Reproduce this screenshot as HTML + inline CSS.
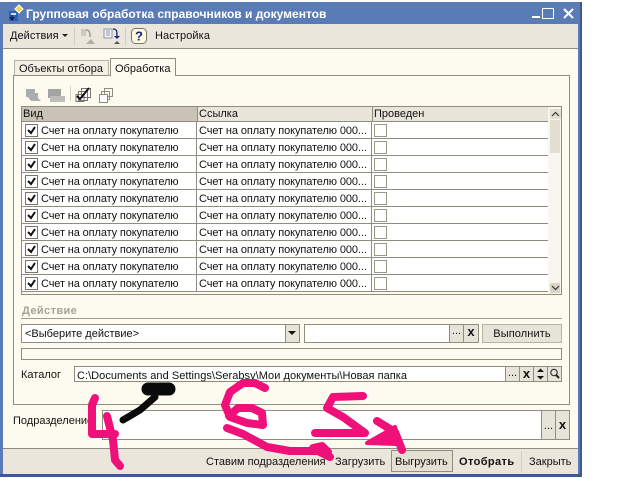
<!DOCTYPE html>
<html><head><meta charset="utf-8">
<style>
html,body{margin:0;padding:0;background:#fff}
#w{position:relative;width:640px;height:482px;overflow:hidden;background:#fff;font:11px "Liberation Sans",sans-serif;color:#111}
#w div{position:absolute;box-sizing:border-box}
.t{white-space:nowrap;line-height:14px}
.b{border:1px solid #8f8c80}
.btn{background:#e6e3d8;border:1px solid #8f8c80;text-align:center;line-height:13px}
.r{left:22px;width:526px;height:17px;border-bottom:1px solid #8f8c80;background:#fff}
.ck{left:3px;top:2px;width:13px;height:13px;border:1px solid #77756c;background:#fff}
.ck2{left:352px;top:2px;width:13px;height:13px;border:1px solid #99968a;background:#fff}
.a{left:19px;top:2px;letter-spacing:-.12px}
.c{left:177px;top:2px;letter-spacing:-.1px}
.v1{left:174px;top:0;width:1px;height:17px;background:#8f8c80}
.v2{left:349px;top:0;width:1px;height:17px;background:#8f8c80}
</style></head><body>
<div id="w">
<div style="left:0;top:2px;width:582px;height:475px;background:#5a7cb6"></div>
<div style="left:580px;top:2px;width:2px;height:475px;background:#3d5a8e"></div>
<div style="left:0;top:474px;width:582px;height:3px;background:#3d5a8e"></div>
<div style="left:3px;top:24px;width:575px;height:450px;background:#fdfaef"></div>
<div class="t" style="left:26px;top:7px;color:#fff;font-weight:bold;font-size:12px">Групповая обработка справочников и документов</div>
<svg style="position:absolute;left:8px;top:4px" width="18" height="18"><rect x="1" y="7" width="9" height="10" fill="#2b5fc0"/><rect x="3" y="9" width="5" height="2" fill="#dde"/><path d="M4 11v4M2 13l2 3 2-3" stroke="#111" fill="none"/><path d="M11 1l4 4-4 4-4-4z" fill="#f3d84a" stroke="#fff"/></svg>
<div style="left:532px;top:16px;width:8px;height:2px;background:#fff"></div>
<div style="left:542px;top:8px;width:12px;height:11px;border:1.5px solid #fff"></div>
<svg style="position:absolute;left:563px;top:8px" width="12" height="12"><path d="M1 1l9 9M10 1l-9 9" stroke="#fff" stroke-width="2"/></svg>

<div style="left:3px;top:24px;width:575px;height:25px;background:#ebe6dc;border-bottom:1px solid #8f8c80"></div>
<div class="t" style="left:10px;top:29px;letter-spacing:.05px">Действия</div>
<svg style="position:absolute;left:62px;top:34px" width="7" height="4"><path d="M0 0h6l-3 3z" fill="#222"/></svg>
<div style="left:74px;top:27px;width:1px;height:19px;background:#d3cfc4"></div>
<div style="left:125px;top:27px;width:1px;height:19px;background:#d3cfc4"></div>
<svg style="position:absolute;left:78px;top:26px" width="20" height="20"><path d="M3 3h5v7H3z" fill="#c9c9c6"/><path d="M8 4c4 0 4 3 4 7" stroke="#9a9a96" stroke-width="1.5" fill="none"/><path d="M8 18l5-5 4 5z" fill="#aeb0a8"/></svg>
<svg style="position:absolute;left:103px;top:26px" width="20" height="20"><rect x="1" y="3" width="8" height="9" fill="#f4f4f4" stroke="#8c93a8"/><path d="M3 5h4M3 7h4M3 9h4" stroke="#8c93a8"/><path d="M10 3c4 0 4 2 4 8" stroke="#14247f" stroke-width="1.3" fill="none"/><path d="M11 10h6l-3 3z" fill="#14247f"/><path d="M11 18l3-3 3 3z" fill="#55554f"/></svg>
<svg style="position:absolute;left:130px;top:26px" width="18" height="20"><rect x="1.5" y="2.5" width="15" height="15" rx="4" fill="#fffbdc" stroke="#77766a"/><text x="9" y="14.5" font-family="Liberation Sans" font-weight="bold" font-size="13" text-anchor="middle" fill="#12208c">?</text></svg>
<div class="t" style="left:155px;top:29px;letter-spacing:.1px">Настройка</div>

<div style="left:13px;top:75px;width:557px;height:330px;border:1px solid #8f8c80"></div>
<div style="left:14px;top:60px;width:95px;height:16px;background:#f3efe3;border:1px solid #b5b2a6;border-bottom:1px solid #8f8c80"></div>
<div class="t" style="left:19px;top:62px">Объекты отбора</div>
<div style="left:110px;top:58px;width:66px;height:18px;background:#fdfaef;border:1px solid #8f8c80;border-bottom:0"></div>
<div class="t" style="left:115px;top:62px">Обработка</div>

<svg style="position:absolute;left:24px;top:85px" width="90" height="18"><path d="M2 4h9v4h3v5l3 3H7l-3-4H2z" fill="#a9adae"/><rect x="24" y="4" width="13" height="9" fill="#a4a4a2"/><rect x="26" y="11" width="15" height="6" fill="#bdbdb9"/><path d="M46.500 1v15" stroke="#d3cfc4"/><path d="M57.500 3.500h9v9h-9zM54.500 6.500h9v9h-9zM52 9.500h8v7h-8z" fill="#fff" stroke="#77756c"/><path d="M53 11l3 3 9-11" stroke="#111" stroke-width="2" fill="none"/><path d="M80.500 3.500h8v8h-8zM77.500 6.500h8v8h-8z" fill="#fdfaef" stroke="#8f8c80"/><path d="M75.500 9.500h8v8h-8z" fill="#fff" stroke="#8f8c80"/></svg>

<div class="b" style="left:21px;top:106px;width:541px;height:189px;background:#fdfaef"></div>
<div style="left:22px;top:107px;width:175px;height:15px;background:#c8c3b5;border-bottom:1px solid #8f8c80"></div>
<div style="left:197px;top:107px;width:175px;height:15px;background:#e9e5da;border-bottom:1px solid #8f8c80;border-left:1px solid #8f8c80"></div>
<div style="left:372px;top:107px;width:176px;height:15px;background:#e9e5da;border-bottom:1px solid #8f8c80;border-left:1px solid #8f8c80"></div>
<div class="t" style="left:23px;top:107px">Вид</div>
<div class="t" style="left:199px;top:107px">Ссылка</div>
<div class="t" style="left:374px;top:107px">Проведен</div>

<div class="r" style="top:122px"><div class="ck"><svg width="11" height="11" style="display:block"><path d="M2 5l3 3 4-6" stroke="#111" stroke-width="2" fill="none"/></svg></div><div class="t a">Счет на оплату покупателю</div><div class="v1"></div><div class="t c">Счет на оплату покупателю 000...</div><div class="v2"></div><div class="ck2"></div></div>
<div class="r" style="top:139px"><div class="ck"><svg width="11" height="11" style="display:block"><path d="M2 5l3 3 4-6" stroke="#111" stroke-width="2" fill="none"/></svg></div><div class="t a">Счет на оплату покупателю</div><div class="v1"></div><div class="t c">Счет на оплату покупателю 000...</div><div class="v2"></div><div class="ck2"></div></div>
<div class="r" style="top:156px"><div class="ck"><svg width="11" height="11" style="display:block"><path d="M2 5l3 3 4-6" stroke="#111" stroke-width="2" fill="none"/></svg></div><div class="t a">Счет на оплату покупателю</div><div class="v1"></div><div class="t c">Счет на оплату покупателю 000...</div><div class="v2"></div><div class="ck2"></div></div>
<div class="r" style="top:173px"><div class="ck"><svg width="11" height="11" style="display:block"><path d="M2 5l3 3 4-6" stroke="#111" stroke-width="2" fill="none"/></svg></div><div class="t a">Счет на оплату покупателю</div><div class="v1"></div><div class="t c">Счет на оплату покупателю 000...</div><div class="v2"></div><div class="ck2"></div></div>
<div class="r" style="top:190px"><div class="ck"><svg width="11" height="11" style="display:block"><path d="M2 5l3 3 4-6" stroke="#111" stroke-width="2" fill="none"/></svg></div><div class="t a">Счет на оплату покупателю</div><div class="v1"></div><div class="t c">Счет на оплату покупателю 000...</div><div class="v2"></div><div class="ck2"></div></div>
<div class="r" style="top:207px"><div class="ck"><svg width="11" height="11" style="display:block"><path d="M2 5l3 3 4-6" stroke="#111" stroke-width="2" fill="none"/></svg></div><div class="t a">Счет на оплату покупателю</div><div class="v1"></div><div class="t c">Счет на оплату покупателю 000...</div><div class="v2"></div><div class="ck2"></div></div>
<div class="r" style="top:224px"><div class="ck"><svg width="11" height="11" style="display:block"><path d="M2 5l3 3 4-6" stroke="#111" stroke-width="2" fill="none"/></svg></div><div class="t a">Счет на оплату покупателю</div><div class="v1"></div><div class="t c">Счет на оплату покупателю 000...</div><div class="v2"></div><div class="ck2"></div></div>
<div class="r" style="top:241px"><div class="ck"><svg width="11" height="11" style="display:block"><path d="M2 5l3 3 4-6" stroke="#111" stroke-width="2" fill="none"/></svg></div><div class="t a">Счет на оплату покупателю</div><div class="v1"></div><div class="t c">Счет на оплату покупателю 000...</div><div class="v2"></div><div class="ck2"></div></div>
<div class="r" style="top:258px"><div class="ck"><svg width="11" height="11" style="display:block"><path d="M2 5l3 3 4-6" stroke="#111" stroke-width="2" fill="none"/></svg></div><div class="t a">Счет на оплату покупателю</div><div class="v1"></div><div class="t c">Счет на оплату покупателю 000...</div><div class="v2"></div><div class="ck2"></div></div>
<div class="r" style="top:275px"><div class="ck"><svg width="11" height="11" style="display:block"><path d="M2 5l3 3 4-6" stroke="#111" stroke-width="2" fill="none"/></svg></div><div class="t a">Счет на оплату покупателю</div><div class="v1"></div><div class="t c">Счет на оплату покупателю 000...</div><div class="v2"></div><div class="ck2"></div></div>

<div style="left:548px;top:107px;width:13px;height:187px;background:#f8f6ee"></div>
<div style="left:550px;top:109px;width:11px;height:10px;background:#e2dfd2"></div>
<div style="left:550px;top:120px;width:10px;height:33px;background:#e2dfd2"></div>
<div style="left:550px;top:283px;width:10px;height:10px;background:#d8d5c8"></div>
<svg style="position:absolute;left:550px;top:110px" width="11" height="8"><path d="M2 6l3.500-3.500L9 6" stroke="#333" stroke-width="1.200" fill="none"/></svg>
<svg style="position:absolute;left:550px;top:284px" width="11" height="8"><path d="M2 2l3.500 3.500L9 2" stroke="#333" stroke-width="1.200" fill="none"/></svg>

<div class="t" style="left:22px;top:304px;font-weight:bold;color:#a5a39a;letter-spacing:.4px">Действие</div>
<div style="left:21px;top:318px;width:541px;height:1px;background:#a09d90"></div>

<div class="b" style="left:21px;top:324px;width:279px;height:19px;background:#fff"></div>
<div class="t" style="left:25px;top:327px">&lt;Выберите действие&gt;</div>
<div class="btn" style="left:285px;top:324px;width:15px;height:19px"></div>
<svg style="position:absolute;left:288px;top:331px" width="9" height="5"><path d="M0 0h8l-4 4z" fill="#111"/></svg>
<div class="b" style="left:304px;top:324px;width:175px;height:19px;background:#fff"></div>
<div class="btn" style="left:449px;top:324px;width:15px;height:19px">...</div>
<div class="btn" style="left:463px;top:324px;width:16px;height:19px;font-weight:bold;font-size:13px">x</div>
<div class="btn" style="left:482px;top:324px;width:80px;height:19px;line-height:18px;border-color:#b5b2a6;letter-spacing:.1px">Выполнить</div>

<div class="b" style="left:21px;top:348px;width:541px;height:12px;background:#fdfaef"></div>

<div class="t" style="left:21px;top:368px">Каталог</div>
<div class="b" style="left:74px;top:366px;width:488px;height:16px;background:#fff"></div>
<div class="t" style="left:77px;top:369px;letter-spacing:.04px">C:\Documents and Settings\Serabsv\Мои документы\Новая папка</div>
<div class="btn" style="left:505px;top:366px;width:15px;height:16px">...</div>
<div class="btn" style="left:519px;top:366px;width:15px;height:16px;font-weight:bold;font-size:13px">x</div>
<div class="btn" style="left:533px;top:366px;width:15px;height:16px"></div>
<div class="btn" style="left:547px;top:366px;width:15px;height:16px"></div>
<svg style="position:absolute;left:536px;top:368px" width="9" height="12"><path d="M1 4l3.500-3.500L8 4zM1 8l3.500 3.500L8 8z" fill="#111"/></svg>
<svg style="position:absolute;left:549px;top:368px" width="12" height="12"><circle cx="5" cy="4.500" r="3.200" fill="none" stroke="#333" stroke-width="1.200"/><path d="M7 7l3 3" stroke="#222" stroke-width="2"/></svg>

<div class="t" style="left:13px;top:414px">Подразделение</div>
<div class="b" style="left:102px;top:410px;width:468px;height:30px;background:#fff"></div>
<div class="btn" style="left:541px;top:410px;width:15px;height:30px;line-height:30px">...</div>
<div class="btn" style="left:555px;top:410px;width:15px;height:30px;line-height:27px;font-weight:bold;font-size:13px">x</div>

<div style="left:3px;top:448px;width:575px;height:26px;background:#ebe6dc;border-top:1px solid #8f8c80"></div>
<div class="t" style="left:206px;top:455px">Ставим подразделения</div>
<div class="t" style="left:335px;top:455px">Загрузить</div>
<div style="left:391px;top:450px;width:62px;height:22px;background:#e4e0d4;border:1px solid #8f8c80"></div>
<div class="t" style="left:395px;top:455px">Выгрузить</div>
<div class="t" style="left:459px;top:455px;font-weight:bold;letter-spacing:.4px">Отобрать</div>
<div style="left:521px;top:451px;width:1px;height:21px;background:#d3cfc4"></div>
<div class="t" style="left:529px;top:455px">Закрыть</div>

<svg style="position:absolute;left:0;top:0" width="640" height="482">
<g fill="none" stroke-linecap="round" stroke-linejoin="round">
<path d="M123 420L140 410L155 397" stroke="#0a0a0a" stroke-width="7"/>
<path d="M148 389L169 389" stroke="#0a0a0a" stroke-width="13"/>
<g stroke="#f0107a" stroke-width="8">
<path d="M95 398L92 405L92 434L115 434"/>
<path d="M107 416L113 440L115 460L120 466"/>
<path d="M265 388L255 383L243 383L230 392L225 405L230 417L247 423L263 425L262 413L252 408L238 408L229 416"/>
<path d="M227 428L243 434L267 447L290 451L318 451L330 457"/>
<path d="M313 448L322 446L328 452"/>
<path d="M363 396L333 397L327 408L343 417L365 433L315 433"/>
<path d="M377 421L395 432L402 450"/>
</g>
<path d="M367 443L395 427L402 450L397 444Z" fill="#f0107a" stroke="#f0107a" stroke-width="4"/>
</g>
</svg>
</div>
</body></html>
